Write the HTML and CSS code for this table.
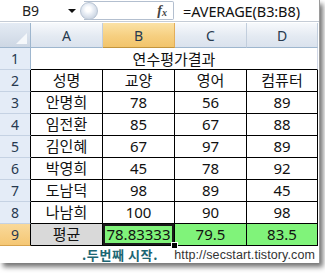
FILE: index.html
```html
<!DOCTYPE html>
<html>
<head>
<meta charset="utf-8">
<link rel="stylesheet" href="styles.css">
</head>
<body>
<div class="window">
  <div class="fbar">
    <div class="namebox">B9</div>
    <div class="drop"></div>
    <div class="pill">
      <span class="orb"></span>
      <span class="fx">f<sub>x</sub></span>
    </div>
    <div class="formula">=AVERAGE(B3:B8)</div>
  </div>
  <div class="sheet">
    <div class="corner"><span class="tri"></span></div>
    <div class="ch">A</div>
    <div class="ch sel">B</div>
    <div class="ch">C</div>
    <div class="ch">D</div>

    <div class="rh">1</div>
    <div class="c title">연수평가결과</div>

    <div class="rh rb">2</div>
    <div class="c t">성명</div><div class="c t">교양</div><div class="c t">영어</div><div class="c t">컴퓨터</div>

    <div class="rh rb">3</div>
    <div class="c t">안명희</div><div class="c t">78</div><div class="c t">56</div><div class="c t">89</div>
    <div class="rh rb">4</div>
    <div class="c t">임전환</div><div class="c t">85</div><div class="c t">67</div><div class="c t">88</div>
    <div class="rh rb">5</div>
    <div class="c t">김인혜</div><div class="c t">67</div><div class="c t">97</div><div class="c t">89</div>
    <div class="rh rb">6</div>
    <div class="c t">박영희</div><div class="c t">45</div><div class="c t">78</div><div class="c t">92</div>
    <div class="rh rb">7</div>
    <div class="c t">도남덕</div><div class="c t">98</div><div class="c t">89</div><div class="c t">45</div>
    <div class="rh rb">8</div>
    <div class="c t">나남희</div><div class="c t">100</div><div class="c t">90</div><div class="c t">98</div>

    <div class="rh rb sel">9</div>
    <div class="c t gray">평균</div>
    <div class="c t green active">78.83333<span class="handle"></span></div>
    <div class="c t green">79.5</div>
    <div class="c t green">83.5</div>
  </div>
  <div class="foot">
    <span class="caption">.두번째 시작.</span>
    <span class="url">http://secstart.tistory.com</span>
  </div>
</div>
</body>
</html>
```

FILE: styles.css
```css
html, body {
  margin: 0;
  padding: 0;
  background: #ffffff;
}

body {
  width: 325px;
  height: 273px;
  overflow: hidden;
  font-family: "Noto Sans", "Noto Sans CJK KR", sans-serif;
}

.window {
  width: 319px;
  background: #ffffff;
  box-shadow: 3px 4px 5px rgba(0, 0, 0, 0.55);
  border-right: 1px solid #9a9a9a;
}

.fbar {
  height: 21px;
  display: flex;
  align-items: center;
  border-bottom: 1px solid #c5ccd6;
  margin-bottom: 1px;
  position: relative;
}

.namebox {
  width: 62px;
  padding-left: 22px;
  box-sizing: border-box;
  font-size: 14px;
  color: #222;
}

.drop {
  width: 0;
  height: 0;
  border-left: 4px solid transparent;
  border-right: 4px solid transparent;
  border-top: 4px solid #111;
  margin-left: 6px;
}

.pill {
  margin-left: 8px;
  width: 90px;
  height: 19px;
  box-sizing: border-box;
  border: 1px solid #b3bfcf;
  border-left: none;
  border-radius: 0 2px 2px 0;
  display: flex;
  align-items: center;
  justify-content: space-between;
  position: relative;
}

.orb {
  width: 18px;
  height: 18px;
  border-radius: 50%;
  margin-left: -4px;
  background: radial-gradient(circle at 45% 40%, #ffffff 0 18%, #e9eef5 40%, #b6c3d4 100%);
  border: 1px solid #b8c4d3;
  box-sizing: border-box;
}

.fx {
  font-family: "Liberation Serif", serif;
  font-style: italic;
  font-weight: bold;
  font-size: 14px;
  color: #444;
  margin-right: 6px;
}

.fx sub {
  font-size: 10px;
  vertical-align: -1px;
}

.formula {
  margin-left: 9px;
  font-size: 14.5px;
  color: #111;
  letter-spacing: -0.1px;
}

.sheet {
  display: grid;
  grid-template-columns: 31px 72px 72px 72px 71px;
  grid-template-rows: 25px repeat(9, 22px);
}

.corner {
  background: linear-gradient(#e4ebf4, #cdd7e4);
  border-right: 1px solid #9eb6ce;
  border-bottom: 1px solid #9eb6ce;
  position: relative;
}

.tri {
  position: absolute;
  right: 3px;
  bottom: 3px;
  width: 0;
  height: 0;
  border-left: 11px solid transparent;
  border-bottom: 11px solid #f5f8fb;
}

.ch {
  background: linear-gradient(#f7f9fc, #e4eaf2 55%, #dae2ed);
  border-right: 1px solid #c2cedd;
  border-bottom: 1px solid #9eb6ce;
  display: flex;
  align-items: center;
  justify-content: center;
  font-size: 14px;
  color: #27394f;
}

.ch.sel {
  background: linear-gradient(#fbe2a6, #f6cf80 55%, #f2c46b);
  border-right-color: #e3ae5a;
  border-bottom-color: #c2953e;
}

.rh {
  background: #e4ecf7;
  border-right: 1px solid #9eb6ce;
  border-bottom: 1px solid #c5d2e3;
  display: flex;
  align-items: center;
  justify-content: center;
  font-size: 14px;
  color: #27394f;
}

.rh.rb {
  border-right-color: #000;
}

.rh.sel {
  background: linear-gradient(#f9d99a, #f5c774);
  border-bottom-color: #d6a24d;
}

.c {
  display: flex;
  align-items: center;
  justify-content: center;
  font-size: 15px;
  color: #111;
  box-sizing: border-box;
  position: relative;
  font-family: "Noto Sans", "Noto Sans CJK KR", sans-serif;
}

.title {
  grid-column: 2 / 6;
  border-bottom: 1px solid #000;
  border-right: 1px solid #d0d7e5;
}

.t {
  border-right: 1px solid #000;
  border-bottom: 1px solid #000;
  line-height: 1;
}

.gray {
  background: #d9d9d9;
}

.green {
  background: #80f37a;
}

.active {
  box-shadow: inset 0 0 0 2px #1a1a1a;
}

.handle {
  position: absolute;
  right: -4px;
  bottom: -4px;
  width: 5px;
  height: 5px;
  background: #000;
  border: 1px solid #fff;
  z-index: 2;
}

.foot {
  height: 17px;
  display: flex;
  align-items: center;
  position: relative;
}

.caption {
  margin-left: 82px;
  font-family: "Noto Sans CJK KR", sans-serif;
  font-weight: bold;
  font-size: 13px;
  letter-spacing: 0.6px;
  color: #1c6673;
}

.url {
  margin-left: auto;
  margin-right: 4px;
  font-family: "Liberation Sans", sans-serif;
  font-size: 12.5px;
  letter-spacing: 0.1px;
  color: #333;
}
```
